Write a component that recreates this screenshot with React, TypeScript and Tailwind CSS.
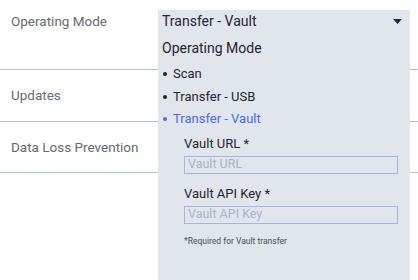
import React from "react";

export default function App() {
  const font = { fontFamily: "Roboto, 'Noto Sans', sans-serif" };
  return (
    <div className="relative w-[418px] h-[280px] bg-white overflow-hidden" style={font}>
      <div className="flex flex-col">
        <div className="h-[70px] border-b border-[#b3bfda] pl-[11px] pt-[11px] text-[13.5px] text-[#666a70]">
          Operating Mode
        </div>
        <div className="h-[52px] border-b border-[#b3bfda] pl-[11px] flex items-center text-[13.5px] text-[#666a70]">
          Updates
        </div>
        <div className="h-[51px] border-b border-[#b3bfda] pl-[11px] flex items-center text-[13.5px] text-[#666a70]">
          Data Loss Prevention
        </div>
      </div>

      <div className="absolute left-[158px] top-[10px] w-[252px] h-[270px] bg-[#e1e5ec] flex flex-col">
        <div className="flex items-center justify-between pl-[4px] pr-[8px] h-[21px] pt-[1px]">
          <span className="text-[14px] text-[#1f2430]">Transfer - Vault</span>
          <svg width="9" height="5" viewBox="0 0 9 5">
            <path d="M0 0 L9 0 L4.5 5 Z" fill="#1f2a44" />
          </svg>
        </div>
        <div className="pl-[4px] mt-[7px] text-[14px] text-[#1f2430] leading-[20px]">Operating Mode</div>
        <ul className="mt-[5px] flex flex-col text-[13px] leading-[22.5px]">
          <li className="flex items-center pl-[5px] text-[#1f2430]">
            <span className="w-[4px] h-[4px] rounded-full bg-[#1f2430] mr-[6px]" />
            Scan
          </li>
          <li className="flex items-center pl-[5px] text-[#1f2430]">
            <span className="w-[4px] h-[4px] rounded-full bg-[#1f2430] mr-[6px]" />
            Transfer - USB
          </li>
          <li className="flex items-center pl-[5px] text-[#4f6af0]">
            <span className="w-[4px] h-[4px] rounded-full bg-[#4f6af0] mr-[6px]" />
            Transfer - Vault
          </li>
        </ul>
        <div className="pl-[26px] pr-[12px] mt-[4px] flex flex-col">
          <label className="text-[13px] text-[#1f2430] leading-[18px]">Vault URL *</label>
          <div className="mt-[3px] h-[18px] border border-[#a8b6d6] flex items-center px-[3px] text-[12.5px] text-[#a9b3c9]">
            Vault URL
          </div>
          <label className="mt-[11px] text-[13px] text-[#1f2430] leading-[18px]">Vault API Key *</label>
          <div className="mt-[3px] h-[18px] border border-[#a8b6d6] flex items-center px-[3px] text-[12.5px] text-[#a9b3c9]">
            Vault API Key
          </div>
          <div className="mt-[11px] text-[8.5px] text-[#4a4f5a] leading-[12px]">*Required for Vault transfer</div>
        </div>
      </div>
    </div>
  );
}
